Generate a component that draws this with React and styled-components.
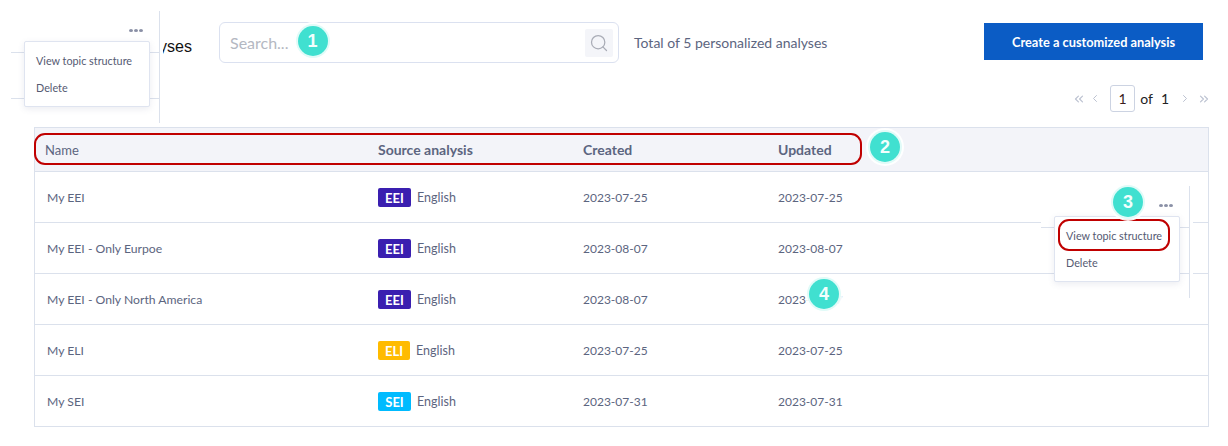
import React from "react";
import styled, { createGlobalStyle } from "styled-components";
import { Search, ChevronLeft, ChevronRight, ChevronsLeft, ChevronsRight } from "lucide-react";

const Global = createGlobalStyle`
  html, body { margin: 0; padding: 0; background: #fff; }
  body { font-family: Lato, "Liberation Sans", sans-serif; color: #5c6580; }
  * { box-sizing: border-box; }
`;

const Page = styled.div`
  position: relative;
  width: 1228px;
  height: 446px;
  overflow: hidden;
  padding: 22px 20px 0 34px;
`;

const TopBar = styled.div`
  display: flex;
  align-items: flex-start;
  height: 41px;
  margin-left: -34px;
  margin-right: 5px;
`;

const Title = styled.h1`
  width: 192px;
  margin: 14px 27px 0 0;
  font: 400 16px/22px "Liberation Sans", Arial, sans-serif;
  color: #111;
  text-align: right;
  white-space: nowrap;
`;

const SearchBox = styled.div`
  display: flex;
  align-items: center;
  justify-content: space-between;
  width: 400px;
  height: 41px;
  padding: 0 5px 0 10px;
  background: #fff;
  border: 1px solid #dbe1f0;
  border-radius: 6px;
  font-size: 16px;
  color: #b4b8c2;
`;

const SearchButton = styled.span`
  display: flex;
  align-items: center;
  justify-content: center;
  width: 28px;
  height: 28px;
  background: #f4f5f9;
  border-radius: 2px;
  color: #a9acb6;
`;

const Total = styled.span`
  margin-left: 15px;
  font-size: 14px;
  line-height: 41px;
  color: #5c6580;
`;

const CreateButton = styled.button`
  width: 219px;
  height: 37px;
  margin: 1px 0 0 auto;
  border: 0;
  background: #0b5cc5;
  color: #fff;
  font: 700 12.8px Lato, sans-serif;
`;

const Pager = styled.div`
  display: flex;
  align-items: center;
  justify-content: flex-end;
  height: 27px;
  margin: 22px -3px 15px 0;
  color: #222;
  font-size: 14px;
`;

const PagerIcon = styled.span`
  display: flex;
  align-items: center;
  justify-content: center;
  width: ${(p) => p.$w}px;
  margin-left: ${(p) => p.$ml || 0}px;
  color: #bcc2d1;
`;

const PageBox = styled.span`
  display: flex;
  align-items: center;
  justify-content: center;
  width: 25px;
  height: 27px;
  margin: 0 5px 0 9px;
  border: 1px solid #ccd3e2;
  border-radius: 3px;
  color: #3a1c1c;
`;

const PageCount = styled.span`
  margin-left: 8px;
`;

const Table = styled.div`
  border: 1px solid #dbe1ec;
  border-bottom: 0;
  width: 1175px;
`;

const HeaderRow = styled.div`
  display: grid;
  grid-template-columns: 333px 205px 195px 1fr;
  align-items: center;
  height: 44px;
  padding-left: 10px;
  background: #f3f4f9;
  border-bottom: 1px solid #dbe1ec;
  font-size: 14px;
  color: #5c6580;
`;

const HeaderCell = styled.div`
  font-weight: ${(p) => (p.$strong ? 700 : 400)};
  font-size: ${(p) => (p.$strong ? 14 : 13)}px;
`;

const Row = styled.div`
  display: grid;
  grid-template-columns: 331px 205px 195px 1fr;
  align-items: center;
  height: 51px;
  padding: 1px 0 0 12px;
  border-bottom: 1px solid #dbe1ec;
  font-size: 12px;
  color: #5c6580;
`;

const Name = styled.div`
  font-size: 12.2px;
`;

const Source = styled.div`
  display: flex;
  align-items: center;
  gap: 6px;
  font-size: 12.5px;
`;

const Tag = styled.span`
  display: inline-flex;
  align-items: center;
  justify-content: center;
  height: 19px;
  width: ${(p) => p.$w}px;
  border-radius: 2px;
  background: ${(p) => p.$bg};
  color: #fff;
  font-size: 13px;
  font-weight: 700;
`;

const Cutout = styled.div`
  position: absolute;
  left: ${(p) => p.$x}px;
  top: ${(p) => p.$y}px;
  width: 152px;
  height: 112px;
  background: #fff;
  border-right: 3px solid #fff;
`;

const CutoutEdge = styled.span`
  position: absolute;
  left: 148px;
  top: 0;
  width: 1px;
  height: 100%;
  background: #dbe1ec;
`;

const CutoutLine = styled.span`
  position: absolute;
  left: 0;
  top: ${(p) => p.$y}px;
  width: 148px;
  height: 1px;
  background: #dbe1ec;
`;

const Dots = styled.span`
  position: absolute;
  left: 118px;
  top: 18px;
  display: flex;
  gap: 1px;
`;

const Dot = styled.i`
  width: 4px;
  height: 3px;
  border-radius: 50%;
  background: #8a90a6;
`;

const Menu = styled.div`
  position: absolute;
  left: 13px;
  top: 30px;
  width: 126px;
  height: 66px;
  padding: 5px 11px;
  background: #fff;
  border: 1px solid #dfe4f0;
  border-radius: 2px;
  box-shadow: 0 2px 6px rgba(90, 100, 140, 0.12);
`;

const MenuItem = styled.div`
  height: 27px;
  font-size: 10.8px;
  line-height: 27px;
  color: #555a72;
  white-space: nowrap;
`;

const Badge = styled.span`
  position: absolute;
  left: ${(p) => p.$x - 15}px;
  top: ${(p) => p.$y - 15}px;
  display: flex;
  align-items: center;
  justify-content: center;
  width: 30px;
  height: 30px;
  border-radius: 50%;
  background: #40e0d0;
  box-shadow: 0 0 0 2px #e0fbf8, 0 0 0 4px rgba(255, 255, 255, 0.92);
  color: #f2fffd;
  font: 700 18px "Liberation Sans", Arial, sans-serif;
`;

const Highlight = styled.span`
  position: absolute;
  left: ${(p) => p.$x}px;
  top: ${(p) => p.$y}px;
  width: ${(p) => p.$w}px;
  height: ${(p) => p.$h}px;
  border: 2px solid #c00000;
  border-radius: 11px;
`;

const rows = [
  ["My EEI", "EEI", "2023-07-25", "2023-07-25"],
  ["My EEI - Only Eurpoe", "EEI", "2023-08-07", "2023-08-07"],
  ["My EEI - Only North America", "EEI", "2023-08-07", "2023-08-07"],
  ["My ELI", "ELI", "2023-07-25", "2023-07-25"],
  ["My SEI", "SEI", "2023-07-31", "2023-07-31"],
];

const tags = {
  EEI: { bg: "#3a1fb0", w: 33 },
  ELI: { bg: "#ffbb00", w: 32 },
  SEI: { bg: "#00bbff", w: 33 },
};

const ActionsCutout = ({ x, y }) => (
  <Cutout $x={x} $y={y}>
    <CutoutLine $y={41} />
    <CutoutLine $y={87} />
    <CutoutEdge />
    <Dots>
      <Dot />
      <Dot />
      <Dot />
    </Dots>
    <Menu>
      <MenuItem>View topic structure</MenuItem>
      <MenuItem>Delete</MenuItem>
    </Menu>
  </Cutout>
);

export default function App() {
  return (
    <Page>
      <Global />
      <TopBar>
        <Title>Personalized analyses</Title>
        <SearchBox>
          Search...
          <SearchButton>
            <Search size={20} strokeWidth={1.5} />
          </SearchButton>
        </SearchBox>
        <Total>Total of 5 personalized analyses</Total>
        <CreateButton>Create a customized analysis</CreateButton>
      </TopBar>
      <Pager>
        <PagerIcon $w={14}><ChevronsLeft size={14} /></PagerIcon>
        <PagerIcon $w={12} $ml={3}><ChevronLeft size={13} /></PagerIcon>
        <PageBox>1</PageBox>
        of
        <PageCount>1</PageCount>
        <PagerIcon $w={12} $ml={10}><ChevronRight size={13} /></PagerIcon>
        <PagerIcon $w={14} $ml={6}><ChevronsRight size={14} /></PagerIcon>
      </Pager>
      <Table>
        <HeaderRow>
          <HeaderCell>Name</HeaderCell>
          <HeaderCell $strong>Source analysis</HeaderCell>
          <HeaderCell $strong>Created</HeaderCell>
          <HeaderCell $strong>Updated</HeaderCell>
        </HeaderRow>
        {rows.map(([name, tag, created, updated]) => (
          <Row key={name}>
            <Name>{name}</Name>
            <Source>
              <Tag $bg={tags[tag].bg} $w={tags[tag].w}>{tag}</Tag>
              English
            </Source>
            <div>{created}</div>
            <div>{updated}</div>
          </Row>
        ))}
      </Table>
      <ActionsCutout x={11} y={11} />
      <ActionsCutout x={1041} y={186} />
      <Highlight $x={34} $y={133} $w={828} $h={32} />
      <Highlight $x={1058} $y={219} $w={112} $h={32} />
      <Badge $x={312.5} $y={41}>1</Badge>
      <Badge $x={885} $y={147}>2</Badge>
      <Badge $x={1128} $y={202}>3</Badge>
      <Badge $x={824} $y={294}>4</Badge>
    </Page>
  );
}
